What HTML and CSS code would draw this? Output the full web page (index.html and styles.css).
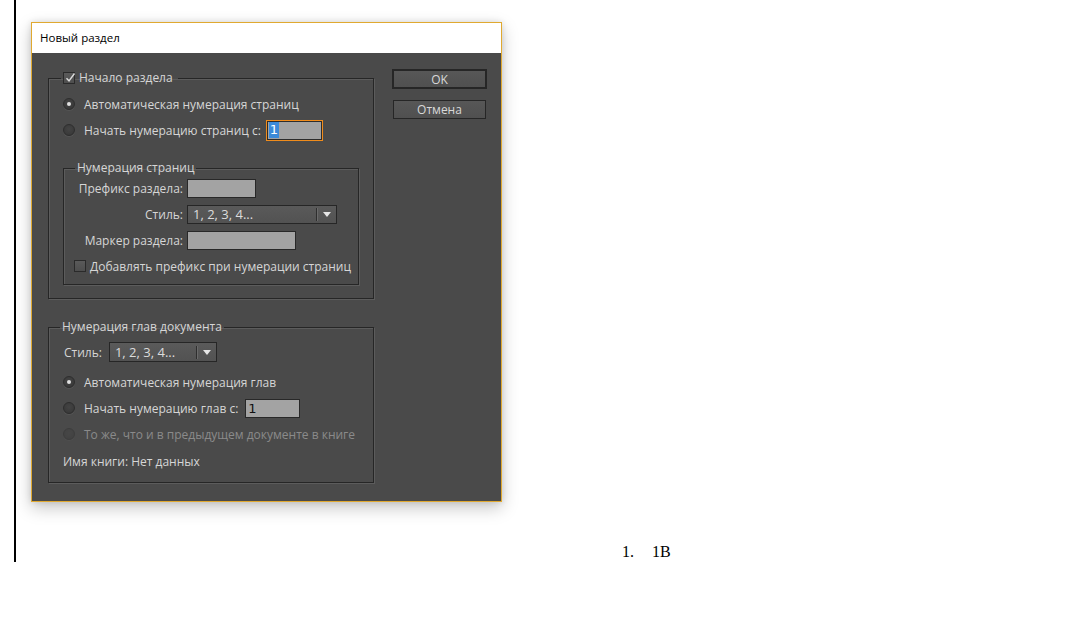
FILE: index.html
```html
<!DOCTYPE html>
<html lang="ru">
<head>
<meta charset="utf-8">
<title>Новый раздел</title>
<link rel="stylesheet" href="styles.css">
</head>
<body>
<div class="doc">
  <div class="dialog">
    <div class="titlebar">Новый раздел</div>
    <div class="body">
      <div class="main">
        <fieldset class="group g-section">
          <legend class="lg-section"><span class="check checked"><svg viewBox="0 0 12 12" width="12" height="12"><path d="M2.5 6.2 L5 8.8 L10.5 1.5" fill="none" stroke="#dcdcdc" stroke-width="1.4"/></svg></span>Начало раздела</legend>
          <div class="rows">
            <div class="row"><span class="radio on"></span><span class="txt">Автоматическая нумерация страниц</span></div>
            <div class="row"><span class="radio"></span><span class="txt">Начать нумерацию страниц с:</span><span class="field focus w-start"><span class="sel">1</span></span></div>
          </div>
          <fieldset class="group inner">
            <legend class="lg-inner">Нумерация страниц</legend>
            <div class="form">
              <span class="lbl">Префикс раздела:</span><span class="field w-prefix"></span>
              <span class="lbl">Стиль:</span><span class="select w-style"><span class="sv">1, 2, 3, 4...</span><span class="sep"></span><span class="arrow"></span></span>
              <span class="lbl">Маркер раздела:</span><span class="field w-marker"></span>
            </div>
            <div class="row chk-row"><span class="check"></span><span class="txt">Добавлять префикс при нумерации страниц</span></div>
          </fieldset>
        </fieldset>

        <fieldset class="group g-chapter">
          <legend class="lg-chapter">Нумерация глав документа</legend>
          <div class="row style-row"><span class="txt">Стиль:</span><span class="select w-cstyle"><span class="sv">1, 2, 3, 4...</span><span class="sep"></span><span class="arrow"></span></span></div>
          <div class="row"><span class="radio on"></span><span class="txt">Автоматическая нумерация глав</span></div>
          <div class="row"><span class="radio"></span><span class="txt">Начать нумерацию глав с:</span><span class="field w-cstart"><span class="val">1</span></span></div>
          <div class="row disabled"><span class="radio"></span><span class="txt">То же, что и в предыдущем документе в книге</span></div>
          <div class="row book"><span class="txt">Имя книги: Нет данных</span></div>
        </fieldset>
      </div>
      <div class="buttons">
        <div class="btn default">OK</div>
        <div class="btn">Отмена</div>
      </div>
    </div>
  </div>
  <div class="list"><span class="num">1.</span><span>1B</span></div>
</div>
</body>
</html>
```

FILE: styles.css
```css
* { box-sizing: border-box; }
html, body { margin: 0; padding: 0; background: #fff; }
body { width: 1080px; height: 620px; overflow: hidden; font-family: "Open Sans", "Liberation Sans", sans-serif; }

.doc {
  margin-left: 14px;
  border-left: 2px solid #000;
  height: 562px;
  padding-top: 22px;
  padding-left: 15px;
}

.dialog {
  width: 471px;
  height: 480px;
  border: 1px solid #e0a930;
  background: #4a4a4a;
  box-shadow: 0 6px 16px rgba(0,0,0,0.22), 0 0 6px rgba(0,0,0,0.12);
  display: flex;
  flex-direction: column;
}

.titlebar {
  height: 30px;
  background: #fff;
  color: #000;
  font-size: 11.5px;
  line-height: 30px;
  padding-left: 8px;
}

.body {
  flex: 1;
  display: flex;
  align-items: flex-start;
  padding: 18px 0 0 16px;
  color: #d6d6d6;
  font-size: 12px;
}

.main { width: 327px; }

.group {
  margin: 0;
  border: 1px solid #262626;
  box-shadow: inset 1px 1px 0 #5c5c5c, 1px 1px 0 #5c5c5c;
  min-width: 0;
}

.group legend {
  line-height: 14px;
  height: 14px;
  padding: 0 2px;
  display: flex;
  align-items: center;
}

.g-section {
  width: 326px;
  padding: 0 14px 13px 14px;
}
.lg-section { margin-left: -2px; padding-right: 5px !important; }
.lg-section .check { margin-right: 4px; }

.rows { padding-top: 6px; }

.row {
  height: 26px;
  display: flex;
  align-items: center;
  white-space: nowrap;
}
.row .radio { margin-right: 9px; }

.inner {
  margin-top: 18px;
  width: 296px;
  padding: 0 10px 5px 10px;
}
.lg-inner { margin-left: 1px; }

.form {
  display: grid;
  grid-template-columns: 109px auto;
  column-gap: 4px;
  grid-auto-rows: 26px;
  align-items: center;
  justify-items: start;
}
.form .lbl { justify-self: end; white-space: nowrap; }

.chk-row .check { margin-right: 4px; }

.g-chapter {
  margin-top: 21px;
  width: 326px;
  padding: 5px 14px 8px 14px;
}
.lg-chapter { margin-left: -3px; }
.style-row { margin-bottom: 4px; }
.style-row .txt { margin-right: 7px; margin-left: 1px; }
.row.book { margin-top: 1px; }

.disabled { color: #8a8a8a; }
.disabled .radio { opacity: 0.45; }

/* controls */
.radio {
  width: 12px; height: 12px;
  border-radius: 50%;
  border: 1px solid #2e2e2e;
  background: radial-gradient(circle at 50% 40%, #444 0%, #3a3a3a 70%);
  box-shadow: 0 1px 0 #555;
  display: flex; align-items: center; justify-content: center;
  flex: none;
}
.radio.on::after {
  content: "";
  width: 4px; height: 4px; border-radius: 50%;
  background: #e0e0e0;
}

.check {
  width: 12px; height: 12px;
  border: 1px solid #2a2a2a;
  background: linear-gradient(#5a5a5a, #4e4e4e);
  display: inline-flex; align-items: center; justify-content: center;
  flex: none;
  position: relative;
}
.check svg { position: absolute; left: 0; top: -1px; overflow: visible; }

.field {
  display: flex;
  align-items: center;
  background: #a3a3a3;
  border: 1px solid #282828;
  height: 19px;
  color: #111;
  font-size: 13px;
  font-family: "DejaVu Sans", sans-serif;
}
.field.focus {
  border: 1px solid #f08c1c;
  box-shadow: inset 0 0 0 1px #2c2c2c;
  height: 21px;
  padding-left: 2px;
  margin-left: 5px;
}
.sel {
  background: #3c8ad8;
  color: #fff;
  line-height: 16px;
  height: 16px;
  padding: 0 1px;
}
.val { padding-left: 2px; }

.w-start { width: 57px; }
.w-prefix { width: 69px; }
.w-marker { width: 109px; }
.w-cstart { width: 55px; margin-left: 7px; }

.select {
  display: flex;
  align-items: center;
  height: 19px;
  border: 1px solid #262626;
  background: linear-gradient(#5a5a5a, #525252);
  color: #dcdcdc;
  font-size: 13px;
  padding-left: 5px;
}
.select .sv { flex: 1; }
.select .sep {
  width: 1px; height: 13px;
  background: #2e2e2e;
  box-shadow: 1px 0 0 #6a6a6a;
  margin-right: 6px;
}
.select .arrow {
  width: 0; height: 0;
  border-left: 4px solid transparent;
  border-right: 4px solid transparent;
  border-top: 5px solid #e6e6e6;
  margin-right: 5px;
}
.w-style { width: 150px; }
.w-cstyle { width: 108px; height: 20px; }

.buttons {
  margin-left: 17px;
  margin-top: -2px;
  width: 95px;
  display: flex;
  flex-direction: column;
  align-items: center;
  gap: 11px;
}
.btn {
  width: 93px;
  height: 19px;
  border: 1px solid #262626;
  background: linear-gradient(#575757, #505050);
  color: #d8d8d8;
  font-size: 12px;
  display: flex; align-items: center; justify-content: center;
}
.btn.default {
  width: 95px;
  height: 20px;
  border: 2px solid #262626;
}

.list {
  margin-top: 41px;
  padding-left: 591px;
  font-family: "Liberation Serif", serif;
  font-size: 16px;
  line-height: 18px;
  color: #000;
  display: flex;
}
.list .num { width: 30px; }
```
